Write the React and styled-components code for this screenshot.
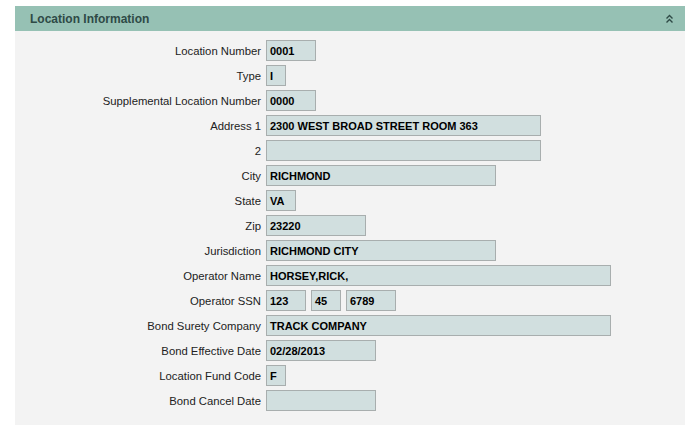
import React from 'react'
import styled, { createGlobalStyle } from 'styled-components'

const GlobalStyle = createGlobalStyle`
  body {
    margin: 0;
    background: #ffffff;
    font-family: "Liberation Sans", Arial, sans-serif;
  }
`

const Panel = styled.section`
  margin: 6px 0 0 15px;
  width: 670px;
  background: #f3f3f3;
`

const PanelHeader = styled.header`
  height: 25px;
  background: #96c1b4;
  display: flex;
  align-items: center;
  justify-content: space-between;
  padding: 0 12px 0 15px;
  box-sizing: border-box;
`

const PanelTitle = styled.h2`
  margin: 0;
  font-size: 12px;
  font-weight: bold;
  color: #2e4a46;
`

const Collapse = styled.svg`
  width: 7px;
  height: 10px;
  display: block;
`

const Form = styled.div`
  display: grid;
  grid-template-columns: 246px 1fr;
  column-gap: 5px;
  row-gap: 4px;
  padding: 9px 0 14px;
`

const Label = styled.label`
  font-size: 11.3px;
  color: #222;
  text-align: right;
  align-self: center;
  white-space: nowrap;
`

const Fields = styled.div`
  display: flex;
  gap: 5px;
`

const Field = styled.div`
  width: ${({ w }) => w}px;
  height: 21px;
  box-sizing: border-box;
  border: 1px solid #a8aeae;
  background: #d1dfdf;
  padding: 0 3px;
  display: flex;
  align-items: center;
  font-size: 11px;
  font-weight: bold;
  color: #000;
  white-space: nowrap;
  overflow: hidden;
`

const rows = [
  { label: 'Location Number', fields: [['0001', 50]] },
  { label: 'Type', fields: [['I', 20]] },
  { label: 'Supplemental Location Number', fields: [['0000', 50]] },
  { label: 'Address 1', fields: [['2300 WEST BROAD STREET ROOM 363', 275]] },
  { label: '2', fields: [['', 275]] },
  { label: 'City', fields: [['RICHMOND', 230]] },
  { label: 'State', fields: [['VA', 30]] },
  { label: 'Zip', fields: [['23220', 100]] },
  { label: 'Jurisdiction', fields: [['RICHMOND CITY', 230]] },
  { label: 'Operator Name', fields: [['HORSEY,RICK,', 345]] },
  { label: 'Operator SSN', fields: [['123', 40], ['45', 30], ['6789', 50]] },
  { label: 'Bond Surety Company', fields: [['TRACK COMPANY', 345]] },
  { label: 'Bond Effective Date', fields: [['02/28/2013', 110]] },
  { label: 'Location Fund Code', fields: [['F', 20]] },
  { label: 'Bond Cancel Date', fields: [['', 110]] },
]

const App = () => {
  return (
    <>
      <GlobalStyle />
      <Panel>
        <PanelHeader>
          <PanelTitle>Location Information</PanelTitle>
          <Collapse viewBox="0 0 7 10">
            <path d="M0.5 4.5 L3.5 1.5 L6.5 4.5 M0.5 8.5 L3.5 5.5 L6.5 8.5" fill="none" stroke="#2e4a46" strokeWidth="1.4" />
          </Collapse>
        </PanelHeader>
        <Form>
          {rows.map(({ label, fields }) => (
            <React.Fragment key={label}>
              <Label>{label}</Label>
              <Fields>
                {fields.map(([value, w], i) => (
                  <Field key={i} w={w}>{value}</Field>
                ))}
              </Fields>
            </React.Fragment>
          ))}
        </Form>
      </Panel>
    </>
  )
}

export default App
